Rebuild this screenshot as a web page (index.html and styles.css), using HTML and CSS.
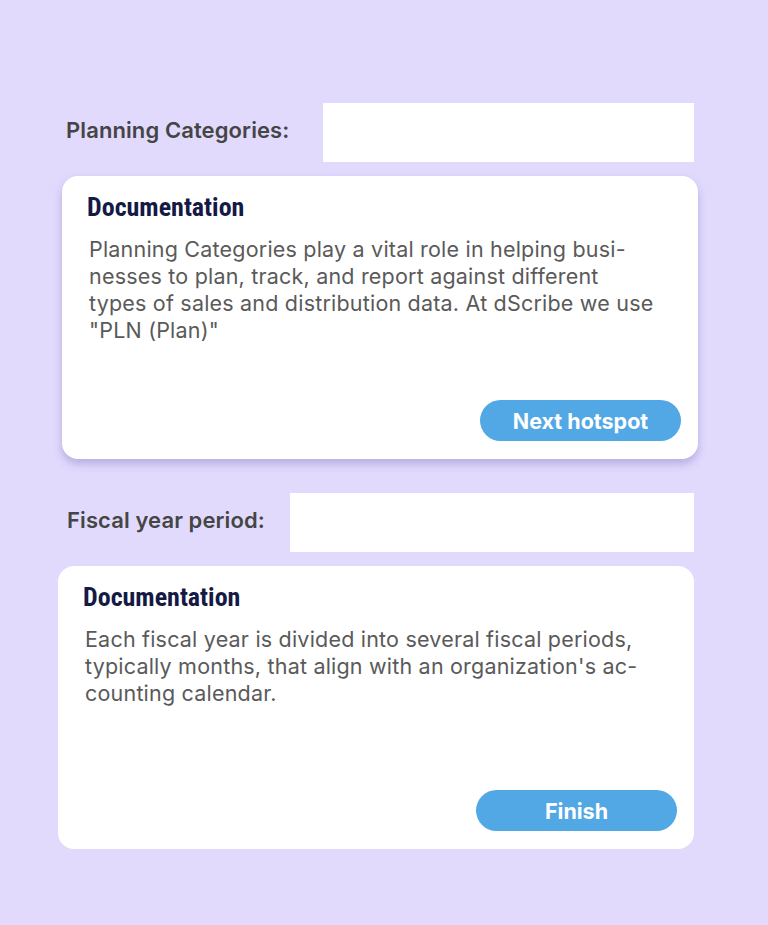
FILE: index.html
```html
<!DOCTYPE html>
<html lang="en">
<head>
<meta charset="utf-8">
<title>Documentation hotspots</title>
<link rel="stylesheet" href="styles.css">
</head>
<body>
<main class="page">
  <section class="block block-first">
    <div class="field field-first">
      <span class="field-label">Planning Categories:</span>
      <div class="field-input input-first"></div>
    </div>
    <div class="card card-shadow">
      <h2 class="card-title">Documentation</h2>
      <p class="card-text">Planning Categories play a vital role in helping busi-<br>nesses to plan, track, and report against different<br>types of sales and distribution data. At dScribe we use<br>"PLN (Plan)"</p>
      <button class="card-btn">Next hotspot</button>
    </div>
  </section>
  <section class="block block-second">
    <div class="field field-second">
      <span class="field-label">Fiscal year period:</span>
      <div class="field-input input-second"></div>
    </div>
    <div class="card">
      <h2 class="card-title">Documentation</h2>
      <p class="card-text">Each fiscal year is divided into several fiscal periods,<br>typically months, that align with an organization's ac-<br>counting calendar.</p>
      <button class="card-btn">Finish</button>
    </div>
  </section>
</main>
</body>
</html>
```

FILE: styles.css
```css
* { box-sizing: border-box; }
html, body {
  margin: 0;
  padding: 0;
  background: #e1dafd;
}
body {
  width: 768px;
  height: 925px;
  font-family: Inter, "Liberation Sans", sans-serif;
}
.page {
  display: flex;
  flex-direction: column;
  padding-top: 103px;
  gap: 34px;
}
.block {
  display: flex;
  flex-direction: column;
  gap: 14px;
  width: 636px;
}
.block-first { margin-left: 62px; }
.block-second { margin-left: 58px; }
.field {
  display: flex;
  align-items: center;
  justify-content: space-between;
}
.field-first { padding-left: 4px; margin-right: 4px; }
.field-second { padding-left: 9px; }
.field-label {
  font-family: Inter, sans-serif;
  font-weight: 600;
  font-size: 22px;
  letter-spacing: 0.1px;
  color: #454545;
  padding-bottom: 5px;
}
.field-input {
  height: 59px;
  background: #ffffff;
}
.input-first { width: 371px; }
.input-second { width: 404px; }
.card {
  height: 283px;
  background: #ffffff;
  border-radius: 16px;
  display: flex;
  flex-direction: column;
  padding: 17px 17px 18px 25px;
}
.card-shadow {
  box-shadow: 0 5px 9px rgba(90, 70, 170, 0.3);
}
.card-title {
  margin: 0;
  font-family: Roboto, sans-serif;
  font-weight: 700;
  font-stretch: 75%;
  font-size: 26px;
  line-height: 28px;
  color: #141a45;
  letter-spacing: 0;
}
.card-text {
  margin: 15px 0 0 2px;
  font-family: Inter, sans-serif;
  font-size: 21.5px;
  letter-spacing: 0.2px;
  line-height: 27px;
  color: #5a5a5a;
}
.card-btn {
  margin-top: auto;
  align-self: flex-end;
  width: 201px;
  height: 41px;
  border: none;
  border-radius: 21px;
  background: #52a8e4;
  color: #ffffff;
  font-family: Inter, sans-serif;
  font-weight: 700;
  font-size: 21.5px;
  padding: 0;
}
```
